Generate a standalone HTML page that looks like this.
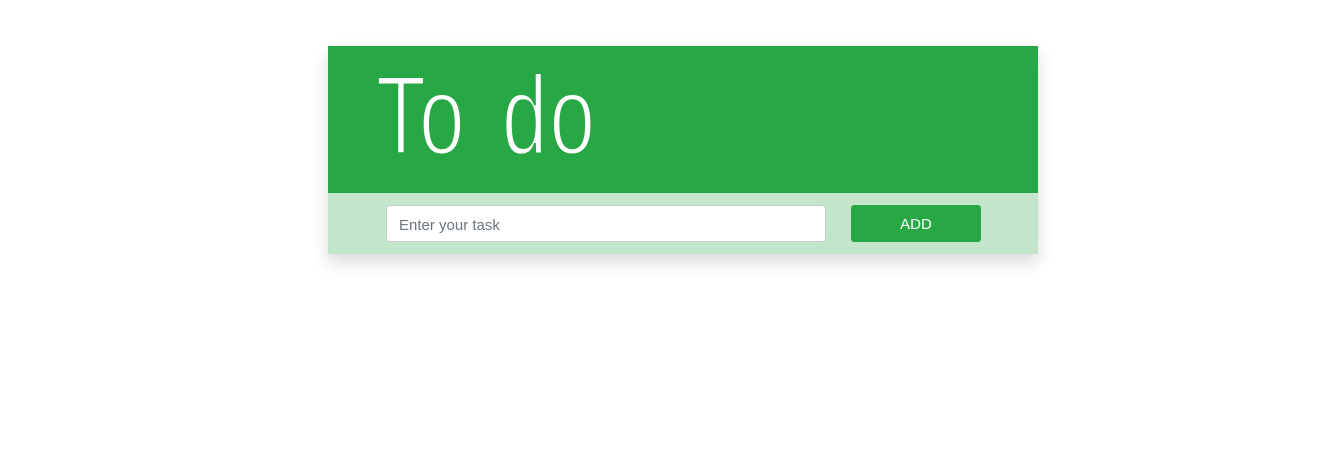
<!DOCTYPE html>
<html><head><meta charset="utf-8"><style>
body{margin:0;background:#fff;width:1317px;height:474px;overflow:hidden;font-family:"Liberation Sans",sans-serif}
.card{position:absolute;left:328px;top:46px;width:710px;height:208px;box-shadow:0 8px 16px rgba(0,0,0,.15)}
.head{position:absolute;left:0;top:0;width:710px;height:147px;background:#28a745}
.title{position:absolute;left:48px;top:5px;font-size:112px;line-height:130px;color:#fff;transform:scaleX(.73);transform-origin:left top;white-space:nowrap;letter-spacing:3px;word-spacing:14px;-webkit-text-stroke:3px #28a745}
.bar{position:absolute;left:0;top:147px;width:710px;height:61px;background:#c3e6cb}
.inp{position:absolute;left:58px;top:12px;width:440px;height:37px;background:#fff;border:1px solid #ccc;border-radius:4px;box-sizing:border-box;font-size:15px;color:#6c757d;line-height:39px;padding-left:12px}
.btn{position:absolute;left:523px;top:12px;width:130px;height:37px;background:#28a745;border-radius:3px;color:#fff;font-size:15px;text-align:center;line-height:40px}
</style></head><body>
<div class="card">
<div class="head"><div class="title">To do</div></div>
<div class="bar"><div class="inp">Enter your task</div><div class="btn">ADD</div></div>
</div>
</body></html>
